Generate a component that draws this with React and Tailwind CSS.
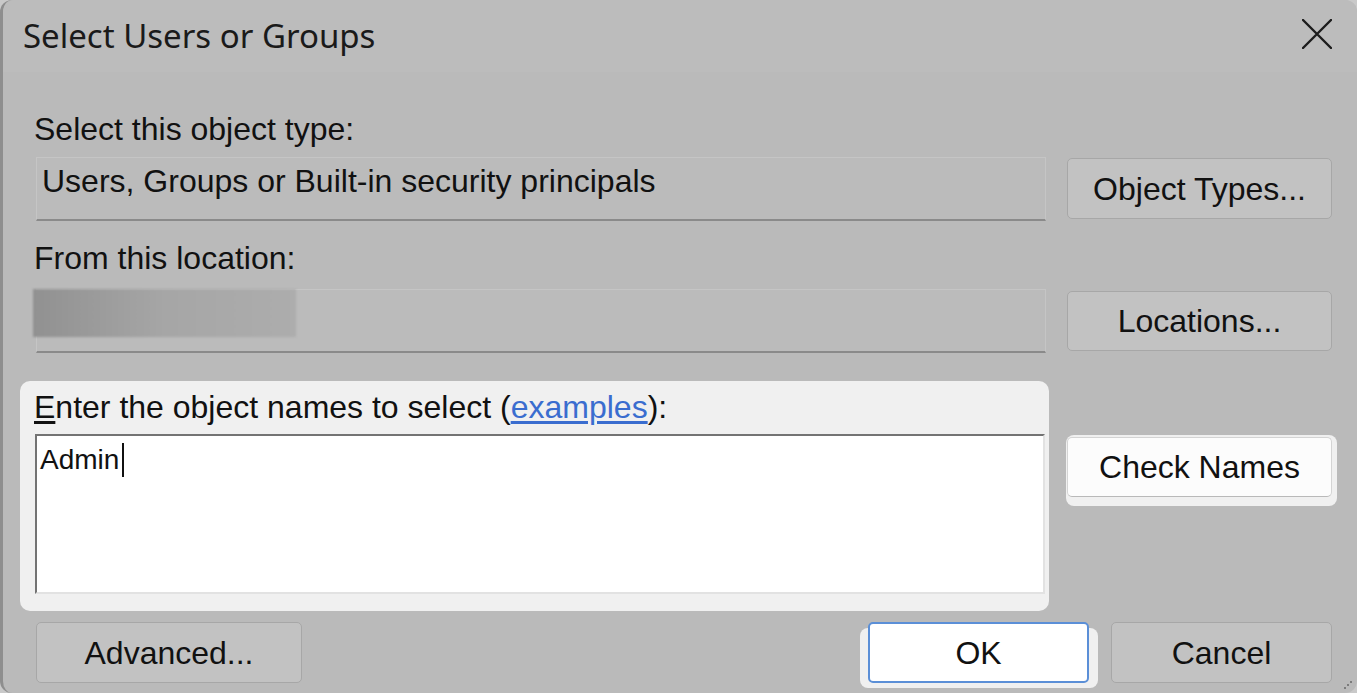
import React from 'react';

const Btn = ({ children, className = '' }) => (
    <div
        className={`flex items-center justify-center rounded-[5px] border border-[#a7a7a7] bg-[#c2c2c2] text-[32px] leading-[32px] text-[#111] ${className}`}
    >
        {children}
    </div>
);

const App = () => {
    return (
        <div
            className="w-[1357px] h-[693px] bg-[#c9c9c9] overflow-hidden"
            style={{ fontFamily: '"Liberation Sans", Arial, sans-serif' }}
        >
            <div className="relative flex flex-col h-full rounded-[12px] border-l-[3px] border-[#8e8e8e] bg-[#bababa]">
                {/* title bar */}
                <div className="flex items-center justify-between h-[72px] pl-[20px] pr-[25px] rounded-tl-[12px] rounded-tr-[12px] bg-[#bcbcbc]">
                    <span className="text-[33px] text-[#1a1a1a]" style={{ fontFamily: '"Noto Sans", "Open Sans", sans-serif' }}>
                        Select Users or Groups
                    </span>
                    <svg width="30" height="30" viewBox="0 0 30 30" className="mb-[4px] shrink-0">
                        <path d="M1 1 L29 29 M29 1 L1 29" stroke="#1c1c1c" strokeWidth="2.4" strokeLinecap="round" />
                    </svg>
                </div>

                <div className="flex flex-col pl-[33px] pr-[25px]">
                    {/* object type */}
                    <div className="mt-[41px] h-[32px] text-[32px] leading-[32px] text-[#111] -ml-[2px]">Select this object type:</div>
                    <div className="flex items-start gap-[21px] mt-[12px]">
                        <div className="shrink-0 w-[1010px] h-[64px] border border-b-2 border-[#c5c5c5] border-b-[#8a8a8a] bg-[#bbbbbb] pl-[5px] pt-[7px] text-[32px] leading-[32px] text-[#111]">
                            Users, Groups or Built-in security principals
                        </div>
                        <Btn className="shrink-0 w-[265px] h-[61px] mt-[1px]">Object Types...</Btn>
                    </div>

                    {/* location */}
                    <div className="mt-[21px] h-[32px] text-[32px] leading-[32px] text-[#111] -ml-[2px]">From this location:</div>
                    <div className="flex items-start gap-[21px] mt-[15px]">
                        <div className="shrink-0 w-[1010px] h-[64px] border border-b-2 border-[#c5c5c5] border-b-[#8a8a8a] bg-[#bbbbbb]">
                            <div className="w-[263px] h-[48px] -ml-[4px] -mt-px bg-gradient-to-r from-[#919191] via-[#a6a6a6] to-[#adadad] blur-[1px]" />
                        </div>
                        <Btn className="shrink-0 w-[265px] h-[60px] mt-[2px]">Locations...</Btn>
                    </div>

                    {/* object names */}
                    <div className="flex items-start mt-[28px]">
                        <div className="shrink-0 -ml-[16px] w-[1029px] h-[230px] rounded-[10px] bg-[#f0f0f0] pl-[15px] pr-[4px] pt-[10px]">
                            <div className="h-[32px] text-[32px] leading-[32px] text-[#111] -ml-[1px]">
                                <span className="underline underline-offset-[3px]">E</span>nter the object names to select (
                                <span className="text-[#3a6dcf] underline underline-offset-[3px]">examples</span>):
                            </div>
                            <div className="mt-[11px] h-[160px] w-full border-2 border-t-[#737373] border-l-[#737373] border-r-[#e2e2e2] border-b-[#e2e2e2] bg-white pl-[3px] pt-[8px]">
                                <div className="flex items-center h-[32px] text-[28px] leading-[32px] text-[#111]">
                                    Admin
                                    <span className="ml-[3px] w-[1.5px] h-[34px] bg-[#111]" />
                                </div>
                            </div>
                        </div>
                        <div className="shrink-0 ml-[17px] mt-[54px] w-[271px] h-[71px] rounded-[8px] bg-[#f0f0f0] pl-[1px] pt-[2px]">
                            <div className="flex items-center justify-center w-[265px] h-[60px] rounded-[5px] border border-[#d4d4d4] border-b-[#b9b9b9] bg-[#fcfcfc] text-[32px] leading-[32px] text-[#111]">
                                Check Names
                            </div>
                        </div>
                    </div>

                    {/* bottom buttons */}
                    <div className="flex items-start mt-[11px]">
                        <Btn className="shrink-0 w-[266px] h-[61px]">Advanced...</Btn>
                        <div className="relative shrink-0 ml-[566px] w-[221px] h-[61px]">
                            <div className="absolute -left-[8px] top-[6px] w-[238px] h-[60px] rounded-[8px] bg-[#f0f0f0]" />
                            <div className="relative flex items-center justify-center w-full h-full rounded-[5px] border-2 border-[#5b8fd7] bg-white text-[32px] leading-[32px] text-[#111]">
                                OK
                            </div>
                        </div>
                        <Btn className="shrink-0 ml-[22px] w-[221px] h-[61px]">Cancel</Btn>
                    </div>
                </div>

                {/* resize grip */}
                <svg width="10" height="10" viewBox="0 0 10 10" className="absolute right-[4px] bottom-[3px]">
                    <rect x="7" y="1" width="2" height="2" fill="#7c7c7c" />
                    <rect x="4" y="4" width="2" height="2" fill="#7c7c7c" />
                    <rect x="1" y="7" width="2" height="2" fill="#7c7c7c" />
                </svg>
            </div>
        </div>
    );
};

export default App;
